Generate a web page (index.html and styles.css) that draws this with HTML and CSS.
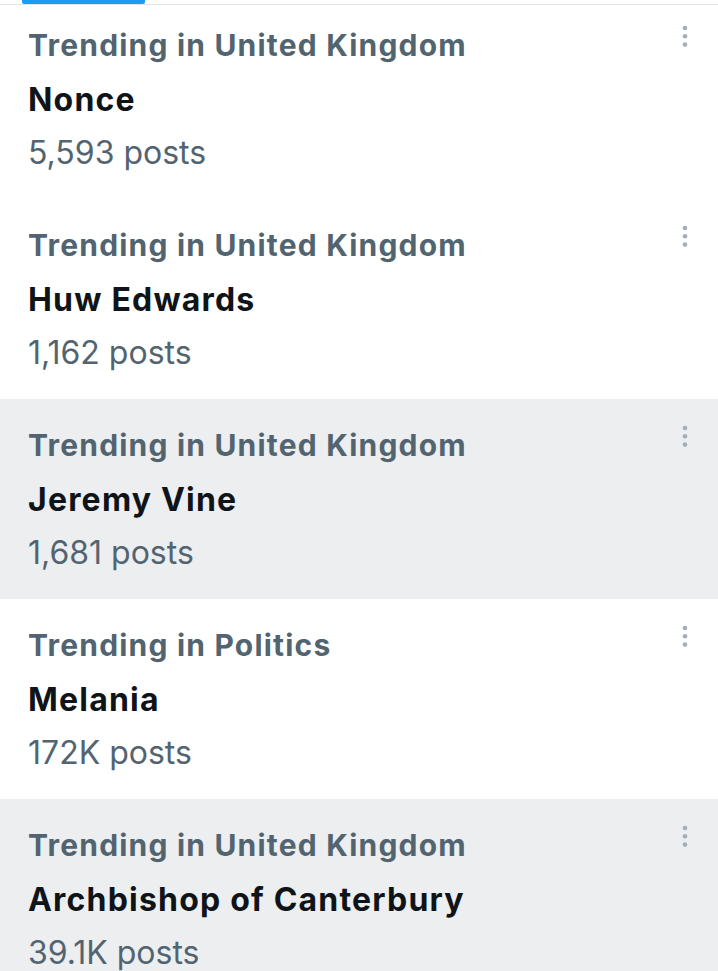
FILE: index.html
```html
<!DOCTYPE html>
<html lang="en">
<head>
<meta charset="utf-8">
<title>Trending</title>
<link rel="stylesheet" href="styles.css">
</head>
<body>
<div class="tabs"><span class="indicator"></span></div>
<ul class="trends">
  <li class="trend first">
    <div class="text">
      <div class="context">Trending in United Kingdom</div>
      <div class="name">Nonce</div>
      <div class="count">5,593 posts</div>
    </div>
    <svg class="more" viewBox="0 0 8 24" width="8" height="24" aria-hidden="true"><circle cx="4" cy="4" r="2.3"/><circle cx="4" cy="12.3" r="2.3"/><circle cx="4" cy="20.6" r="2.3"/></svg>
  </li>
  <li class="trend">
    <div class="text">
      <div class="context">Trending in United Kingdom</div>
      <div class="name">Huw Edwards</div>
      <div class="count">1,162 posts</div>
    </div>
    <svg class="more" viewBox="0 0 8 24" width="8" height="24" aria-hidden="true"><circle cx="4" cy="4" r="2.3"/><circle cx="4" cy="12.3" r="2.3"/><circle cx="4" cy="20.6" r="2.3"/></svg>
  </li>
  <li class="trend shaded">
    <div class="text">
      <div class="context">Trending in United Kingdom</div>
      <div class="name">Jeremy Vine</div>
      <div class="count">1,681 posts</div>
    </div>
    <svg class="more" viewBox="0 0 8 24" width="8" height="24" aria-hidden="true"><circle cx="4" cy="4" r="2.3"/><circle cx="4" cy="12.3" r="2.3"/><circle cx="4" cy="20.6" r="2.3"/></svg>
  </li>
  <li class="trend">
    <div class="text">
      <div class="context">Trending in Politics</div>
      <div class="name">Melania</div>
      <div class="count">172K posts</div>
    </div>
    <svg class="more" viewBox="0 0 8 24" width="8" height="24" aria-hidden="true"><circle cx="4" cy="4" r="2.3"/><circle cx="4" cy="12.3" r="2.3"/><circle cx="4" cy="20.6" r="2.3"/></svg>
  </li>
  <li class="trend shaded">
    <div class="text">
      <div class="context">Trending in United Kingdom</div>
      <div class="name">Archbishop of Canterbury</div>
      <div class="count">39.1K posts</div>
    </div>
    <svg class="more" viewBox="0 0 8 24" width="8" height="24" aria-hidden="true"><circle cx="4" cy="4" r="2.3"/><circle cx="4" cy="12.3" r="2.3"/><circle cx="4" cy="20.6" r="2.3"/></svg>
  </li>
</ul>
</body>
</html>
```
FILE: styles.css
```css
html, body {
  margin: 0;
  padding: 0;
  background: #ffffff;
}

body {
  font-family: Inter, "Liberation Sans", sans-serif;
  color: #0f1419;
  overflow: hidden;
}

.tabs {
  height: 4px;
  border-bottom: 1px solid #e3e6e8;
  padding-left: 22px;
}

.indicator {
  display: block;
  width: 123px;
  height: 4px;
  background: #1d9bf0;
  border-radius: 0 0 2px 2px;
}

.trends {
  list-style: none;
  margin: 0;
  padding: 0;
}

.trend {
  display: flex;
  justify-content: space-between;
  align-items: flex-start;
  box-sizing: border-box;
  height: 200px;
  padding: 21px 29px 0 28px;
}

.trend.first {
  height: 194px;
  padding-top: 15px;
}

.trend.shaded {
  background: #eceef0;
}

.text {
  white-space: nowrap;
}

.context {
  font-weight: 700;
  font-size: 30px;
  line-height: 50px;
  letter-spacing: 1.2px;
  color: #536471;
}

.name {
  font-weight: 700;
  font-size: 32px;
  line-height: 59px;
  letter-spacing: 1.2px;
  color: #0f1419;
}

.count {
  font-weight: 400;
  font-size: 32px;
  line-height: 47px;
  color: #536471;
}

.more {
  flex: none;
  margin-top: 4px;
  fill: #a3aeb8;
}
```
